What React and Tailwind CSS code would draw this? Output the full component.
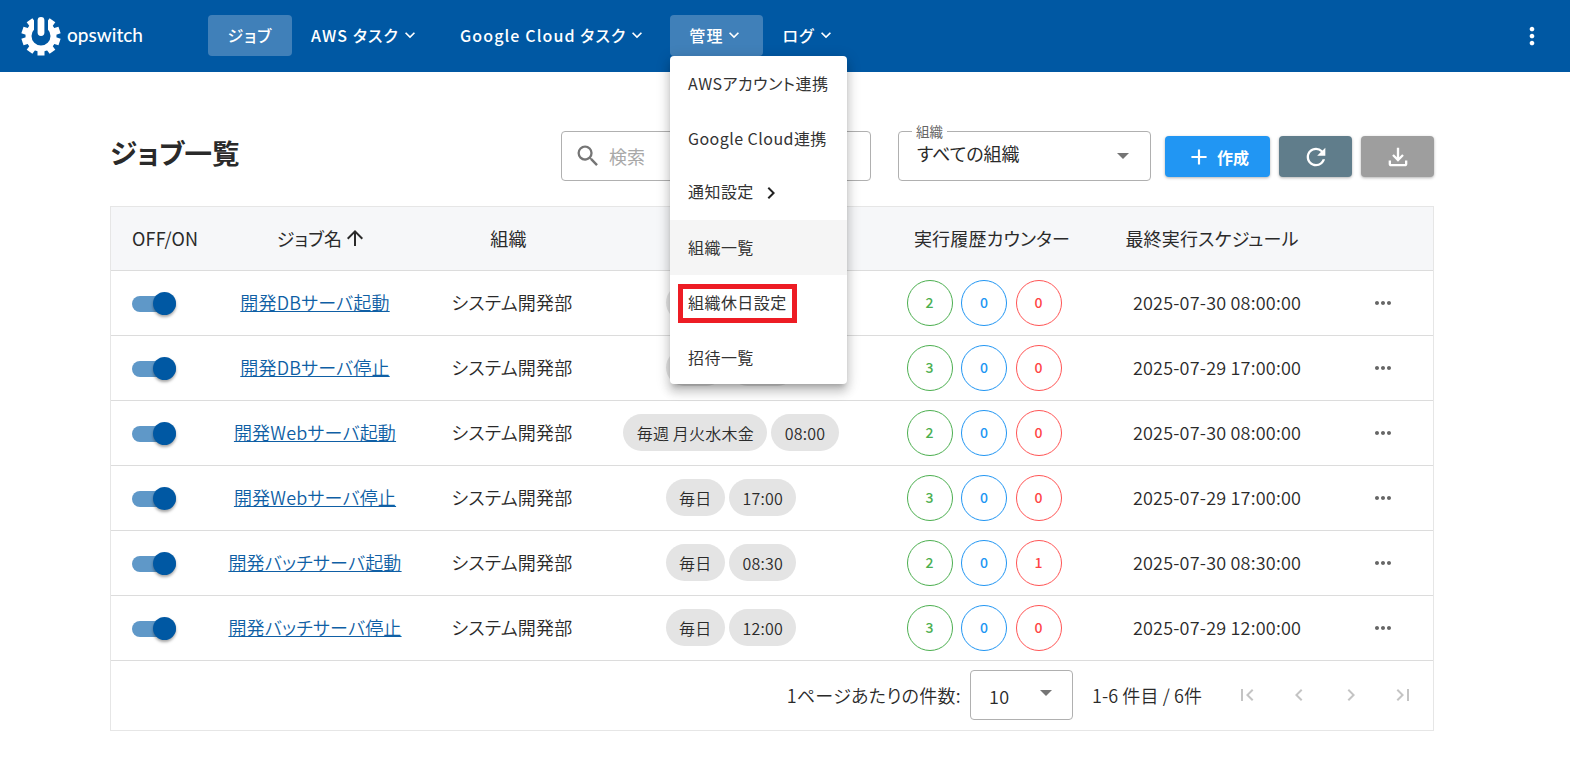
import { MdKeyboardArrowDown, MdChevronRight, MdChevronLeft, MdFirstPage, MdLastPage, MdAdd, MdRefresh, MdOutlineFileDownload, MdSearch, MdArrowUpward, MdMoreHoriz, MdMoreVert } from "react-icons/md";

const jobs = [
  { name: "開発DBサーバ起動", tags: ["毎日", "08:00"], ok: 2, run: 0, ng: 0, last: "2025-07-30 08:00:00" },
  { name: "開発DBサーバ停止", tags: ["毎日", "17:00"], ok: 3, run: 0, ng: 0, last: "2025-07-29 17:00:00" },
  { name: "開発Webサーバ起動", tags: ["毎週 月火水木金", "08:00"], ok: 2, run: 0, ng: 0, last: "2025-07-30 08:00:00" },
  { name: "開発Webサーバ停止", tags: ["毎日", "17:00"], ok: 3, run: 0, ng: 0, last: "2025-07-29 17:00:00" },
  { name: "開発バッチサーバ起動", tags: ["毎日", "08:30"], ok: 2, run: 0, ng: 1, last: "2025-07-30 08:30:00" },
  { name: "開発バッチサーバ停止", tags: ["毎日", "12:00"], ok: 3, run: 0, ng: 0, last: "2025-07-29 12:00:00" },
];

const gearTeeth = [36, 72, 108, 144, 180, 216, 252, 288, 324];

const Logo = () => (
  <div className="flex items-center gap-[6px]">
    <svg width="40" height="40" viewBox="0 0 40 40">
      {gearTeeth.map((angle) => (
        <rect key={angle} x="16.5" y="0.5" width="7" height="7" fill="white" transform={`rotate(${angle} 20 20)`} />
      ))}
      <circle cx="20" cy="20" r="12.5" fill="none" stroke="white" strokeWidth="6" />
      <rect x="13" y="0" width="14" height="14" fill="#0058a3" />
      <rect x="16.6" y="1" width="6.8" height="19" rx="3.4" fill="white" />
    </svg>
    <span className="mb-[4px] w-[76px] font-['Lato',sans-serif] text-[19px] font-medium leading-none text-white">opswitch</span>
  </div>
);

const NavItem = ({ label, active, chevron = true, className = "" }) => (
  <button className={`flex h-[41px] items-center rounded-[4px] text-[16px] font-medium tracking-[1.1px] text-white ${active ? "bg-[#4080b9]" : ""} ${className}`}>
    {label}
    {chevron && <MdKeyboardArrowDown size={20} className="ml-[1px]" />}
  </button>
);

const menuItems = ["AWSアカウント連携", "Google Cloud連携", "通知設定", "組織一覧", "組織休日設定", "招待一覧"];

const AdminMenu = () => (
  <div className="absolute left-[670px] top-[56px] z-20 w-[177px] rounded-[4px] bg-white shadow-[0_5px_5px_-3px_rgba(0,0,0,0.2),0_8px_10px_1px_rgba(0,0,0,0.14),0_3px_14px_2px_rgba(0,0,0,0.12)]">
    {menuItems.map((item, i) => (
      <div key={item} className={`relative flex h-[54.7px] items-center px-[18px] text-[16px] tracking-[0.45px] text-[#333] ${i === 3 ? "bg-[#f5f5f5]" : ""}`}>
        <span className={i === 2 ? "mb-[3px]" : ""}>{item}</span>
        {i === 2 && <MdChevronRight size={24} className="ml-[5px] text-[#222]" />}
        {i === 4 && <div className="absolute left-[8px] top-[9px] h-[39px] w-[119px] border-[5px] border-[#ed1c24]" />}
      </div>
    ))}
  </div>
);

const Toggle = () => (
  <div className="relative mt-[2px] h-[16px] w-[44px] rounded-full bg-[#5f98c8]">
    <div className="absolute left-[21px] top-[-4px] h-[23px] w-[23px] rounded-full bg-[#0058a3] shadow-[0_2px_3px_rgba(0,0,0,0.35)]" />
  </div>
);

const Counter = ({ value, className }) => (
  <div className={`flex h-[46px] w-[46px] items-center justify-center rounded-full border text-[14px] font-medium ${className}`}>
    {value}
  </div>
);

export default function App() {
  return (
    <div className="relative h-[766px] overflow-hidden bg-white font-['Noto_Sans_CJK_JP','Noto_Sans',sans-serif] text-[#2a2a2a] [font-feature-settings:'palt']">
      <header className="flex h-[72px] items-center bg-[#0058a3] pl-[21px] pr-[24px]">
        <Logo />
        <nav className="mb-[2px] ml-[65px] flex items-center">
          <NavItem label="ジョブ" active chevron={false} className="w-[84px] justify-center" />
          <NavItem label="AWS タスク" className="ml-[19px]" />
          <NavItem label="Google Cloud タスク" className="ml-[40px]" />
          <NavItem label="管理" className="ml-[23px] w-[93px] justify-center bg-[#4080b9]" />
          <NavItem label="ログ" className="ml-[19px]" />
        </nav>
        <MdMoreVert size={28} className="ml-auto text-white" />
      </header>

      <AdminMenu />

      <main className="pl-[110px] pr-[136px]">
        <div className="flex h-[135px] items-start pt-[59px]">
          <h1 className="mt-[2px] text-[27.5px] font-bold leading-[38px]">ジョブ一覧</h1>
          <div className="ml-auto flex items-center gap-[27px]">
            <div className="flex h-[50px] w-[310px] items-center rounded-[4px] border border-[#b0b0b0] pl-[12px]">
              <MdSearch size={28} className="text-[#757575]" />
              <span className="ml-[7px] text-[18px] text-[#a8a8a8]">検索</span>
            </div>
            <div className="relative flex h-[50px] w-[253px] items-center justify-between rounded-[4px] border border-[#b0b0b0] pl-[18px] pr-[21px]">
              <span className="absolute left-[13px] top-[-8px] bg-white px-[4px] text-[13.5px] leading-[14px] text-[#666]">組織</span>
              <span className="mb-[5px] text-[18px]">すべての組織</span>
              <div className="h-0 w-0 border-x-[6px] border-t-[6px] border-x-transparent border-t-[#757575]" />
            </div>
          </div>
          <div className="ml-[14px] mt-[5px] flex gap-[9px]">
            <button className="flex h-[41px] w-[105px] items-center justify-center rounded-[4px] bg-[#2196f3] text-[16px] font-bold text-white shadow-[0_1px_3px_rgba(0,0,0,0.3)]">
              <MdAdd size={26} className="mr-[5px]" />
              作成
            </button>
            <button className="flex h-[41px] w-[73px] items-center justify-center rounded-[4px] bg-[#607d8b] text-white shadow-[0_1px_3px_rgba(0,0,0,0.3)]">
              <MdRefresh size={28} />
            </button>
            <button className="flex h-[41px] w-[73px] items-center justify-center rounded-[4px] bg-[#9e9e9e] text-white shadow-[0_1px_3px_rgba(0,0,0,0.3)]">
              <MdOutlineFileDownload size={28} />
            </button>
          </div>
        </div>

        <div className="mt-[-1px] border border-[#e6e6e6]">
          <table className="w-full table-fixed border-collapse text-[18px] tracking-[0.2px]">
            <colgroup>
              <col className="w-[109px]" />
              <col className="w-[190px]" />
              <col className="w-[203px]" />
              <col className="w-[235px]" />
              <col className="w-[270px]" />
              <col className="w-[210px]" />
              <col />
            </colgroup>
            <thead>
              <tr className="h-[63px] border-b border-[#dcdcdc] bg-[#f6f7f9]">
                <th className="pl-[21px] text-left font-normal">OFF/ON</th>
                <th className="pl-[14px] font-normal">
                  <span className="inline-flex items-center gap-[1px]">ジョブ名 <MdArrowUpward size={24} /></span>
                </th>
                <th className="pr-[6px] font-normal">組織</th>
                <th className="font-normal" />
                <th className="pl-[18px] font-normal">実行履歴カウンター</th>
                <th className="pr-[22px] font-normal">最終実行スケジュール</th>
                <th />
              </tr>
            </thead>
            <tbody className="font-[350]">
              {jobs.map((job) => (
                <tr key={job.name} className="h-[65px] border-b border-[#dcdcdc]">
                  <td className="pl-[21px]"><Toggle /></td>
                  <td className="text-center">
                    <a className="text-[#0f5fa5] underline">{job.name}</a>
                  </td>
                  <td className="pl-[1px] text-center">システム開発部</td>
                  <td>
                    <div className="flex justify-center gap-[4px] pl-[1px] text-[16px]">
                      {job.tags.map((tag) => (
                        <span key={tag} className="flex h-[37px] items-center rounded-full bg-[#e4e4e4] px-[13.5px]">{tag}</span>
                      ))}
                    </div>
                  </td>
                  <td>
                    <div className="flex justify-center gap-[8.5px] pl-[2px]">
                      <Counter value={job.ok} className="border-[#4caf50] text-[#4caf50]" />
                      <Counter value={job.run} className="border-[#2196f3] text-[#2196f3]" />
                      <Counter value={job.ng} className="border-[#f55] text-[#f44]" />
                    </div>
                  </td>
                  <td className="pr-[12px] text-center">{job.last}</td>
                  <td>
                    <MdMoreHoriz size={24} className="ml-[43px] text-[#666]" />
                  </td>
                </tr>
              ))}
            </tbody>
          </table>
          <div className="flex h-[69px] items-center justify-end pr-[18px] text-[18px] font-[350] tracking-[0.3px]">
            <span>1ページあたりの件数:</span>
            <div className="ml-[9px] flex h-[50px] w-[103px] items-center justify-between rounded-[4px] border border-[#b0b0b0] pl-[18px] pr-[20px]">
              <span className="mt-[2px]">10</span>
              <div className="mb-[5px] h-0 w-0 border-x-[6px] border-t-[6px] border-x-transparent border-t-[#757575]" />
            </div>
            <span className="ml-[19px] tracking-[0.1px]">1-6 件目 / 6件</span>
            <div className="ml-[33px] flex items-center gap-[28px] text-[#c4c4c4]">
              <MdFirstPage size={24} />
              <MdChevronLeft size={24} />
              <MdChevronRight size={24} />
              <MdLastPage size={24} />
            </div>
          </div>
        </div>
      </main>
    </div>
  );
}
